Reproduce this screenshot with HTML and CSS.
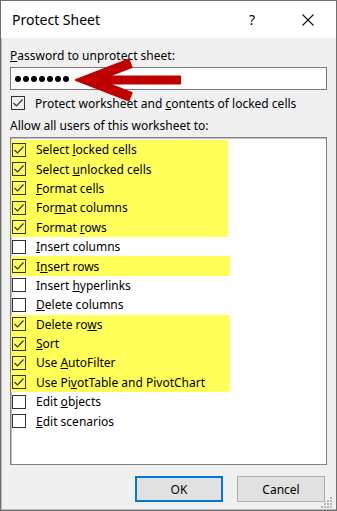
FILE: index.html
```html
<!DOCTYPE html>
<html lang="en">
<head>
    <meta charset="UTF-8">
    <title>Protect Sheet</title>
    <link rel="stylesheet" href="styles.css">
</head>
<body>

    <div class="dialog">
        <div class="titlebar">
            <span class="title">Protect Sheet</span>
            <span class="help">?</span>
            <span class="close">
                <svg width="12" height="12" viewBox="0 0 12 12"><path d="M0.5 0.5 L11.5 11.5 M11.5 0.5 L0.5 11.5" stroke="#111" stroke-width="1.1" fill="none"/></svg>
            </span>
        </div>

        <div class="body">
            <div class="label pwdlabel"><u>P</u>assword to unprotect sheet:</div>
            <div class="pwd">
                <i></i><i></i><i></i><i></i><i></i><i></i><i></i>
            </div>
            <div class="check main">
                <span class="box on"></span>
                <span>Protect worksheet and <u>c</u>ontents of locked cells</span>
            </div>
            <div class="label allow">Allow all users of this worksheet to:</div>

            <div class="list">
                <div class="hl w1">
                    <div class="row"><span class="box on"></span><span>Select <u>l</u>ocked cells</span></div>
                    <div class="row"><span class="box on"></span><span>Select <u>u</u>nlocked cells</span></div>
                    <div class="row"><span class="box on"></span><span><u>F</u>ormat cells</span></div>
                    <div class="row"><span class="box on"></span><span>For<u>m</u>at columns</span></div>
                    <div class="row"><span class="box on"></span><span>Format <u>r</u>ows</span></div>
                </div>
                <div class="row"><span class="box"></span><span><u>I</u>nsert columns</span></div>
                <div class="hl w2">
                    <div class="row"><span class="box on"></span><span>I<u>n</u>sert rows</span></div>
                </div>
                <div class="row"><span class="box"></span><span>Insert <u>h</u>yperlinks</span></div>
                <div class="row"><span class="box"></span><span><u>D</u>elete columns</span></div>
                <div class="hl w2">
                    <div class="row"><span class="box on"></span><span>Delete ro<u>w</u>s</span></div>
                    <div class="row"><span class="box on"></span><span><u>S</u>ort</span></div>
                    <div class="row"><span class="box on"></span><span>Use <u>A</u>utoFilter</span></div>
                    <div class="row"><span class="box on"></span><span>Use Pi<u>v</u>otTable and PivotChart</span></div>
                </div>
                <div class="row"><span class="box"></span><span>Edit <u>o</u>bjects</span></div>
                <div class="row"><span class="box"></span><span><u>E</u>dit scenarios</span></div>
            </div>

            <div class="buttons">
                <button class="btn default">OK</button>
                <button class="btn">Cancel</button>
            </div>
        </div>

        <!-- red annotation arrow pointing at the password -->
        <svg class="arrow" width="110" height="50" viewBox="0 0 110 50">
            <path d="M14 22 L106 22" stroke="#c00000" stroke-width="9" fill="none"/>
            <path d="M56 5 L12 22 L56 39" stroke="#c00000" stroke-width="10" fill="none" stroke-linejoin="miter" stroke-miterlimit="10"/>
        </svg>

        <svg class="grip" width="12" height="12" viewBox="0 0 12 12" fill="#b8b8b8">
            <rect x="9" y="1" width="2" height="2"/>
            <rect x="6" y="4" width="2" height="2"/><rect x="9" y="4" width="2" height="2"/>
            <rect x="3" y="7" width="2" height="2"/><rect x="6" y="7" width="2" height="2"/><rect x="9" y="7" width="2" height="2"/>
            <rect x="0" y="10" width="2" height="2"/><rect x="3" y="10" width="2" height="2"/><rect x="6" y="10" width="2" height="2"/><rect x="9" y="10" width="2" height="2"/>
        </svg>
    </div>

</body>
</html>
```

FILE: styles.css
```css
body{
    margin: 0;
    font-family: "Noto Sans", "Open Sans", sans-serif;
    font-size: 12px;
    color: #000;
}
.dialog{
    position: relative;
    width: 337px;
    height: 511px;
    box-sizing: border-box;
    border: 1px solid #6e6e6e;
    box-shadow: inset 1px 0 0 #b9b9b9, inset 0 -1px 0 #b9b9b9;
    background: #f0f0f0;
    display: flex;
    flex-direction: column;
    overflow: hidden;
}
.titlebar{
    height: 37px;
    background: #fff;
    display: flex;
    align-items: center;
    padding: 0 18px 0 11px;
    flex-shrink: 0;
}
.title{
    flex: 1;
    font-size: 14px;
}
.help{
    width: 20px;
    text-align: center;
    font-size: 14px;
    margin-right: 36px;
}
.close{
    width: 20px;
    height: 12px;
    display: flex;
    justify-content: center;
}
.body{
    padding: 0 9px;
    display: flex;
    flex-direction: column;
}
.label{
    height: 16px;
    line-height: 16px;
}
.pwdlabel{
    margin-top: 10px;
}
.pwd{
    margin-top: 3px;
    height: 21px;
    background: #fff;
    border: 1px solid #7a7a7a;
    display: flex;
    align-items: center;
    gap: 2px;
    padding-left: 4px;
}
.pwd i{
    width: 6px;
    height: 6px;
    border-radius: 50%;
    background: #000;
}
.check{
    display: flex;
    align-items: center;
}
.main{
    margin-top: 5px;
    height: 16px;
    padding-left: 1px;
    gap: 10px;
}
.allow{
    margin-top: 7px;
}
.box{
    width: 12px;
    height: 12px;
    border: 1px solid #333;
    background: #fff;
    flex-shrink: 0;
}
.box.on{
    background: transparent url("data:image/svg+xml,%3Csvg xmlns='http://www.w3.org/2000/svg' width='12' height='12'%3E%3Cpath d='M1.5 6 L4.5 9 L10.5 2.5' stroke='%23333' stroke-width='1.2' fill='none'/%3E%3C/svg%3E") no-repeat center;
}
.list{
    margin-top: 3px;
    height: 324px;
    background: #fff;
    border: 1px solid #828282;
    box-shadow: inset 1px 1px 0 #c4c4c4;
    padding-top: 2px;
}
.row{
    height: 19.4px;
    display: flex;
    align-items: center;
    gap: 10px;
    padding-left: 1px;
}
.hl{
    background: #ffff57;
}
.w1{
    width: 217px;
}
.w2{
    width: 219px;
}
.buttons{
    margin-top: 11px;
    display: flex;
    justify-content: flex-end;
    gap: 14px;
    padding-right: 2px;
}
.btn{
    width: 88px;
    height: 26px;
    font-family: inherit;
    font-size: 12px;
    color: #000;
    background: #e1e1e1;
    border: 1px solid #adadad;
    padding: 0;
}
.btn.default{
    border: 2px solid #0078d7;
}
.arrow{
    position: absolute;
    left: 74px;
    top: 57px;
}
.grip{
    position: absolute;
    right: 3px;
    bottom: 2px;
}
```
